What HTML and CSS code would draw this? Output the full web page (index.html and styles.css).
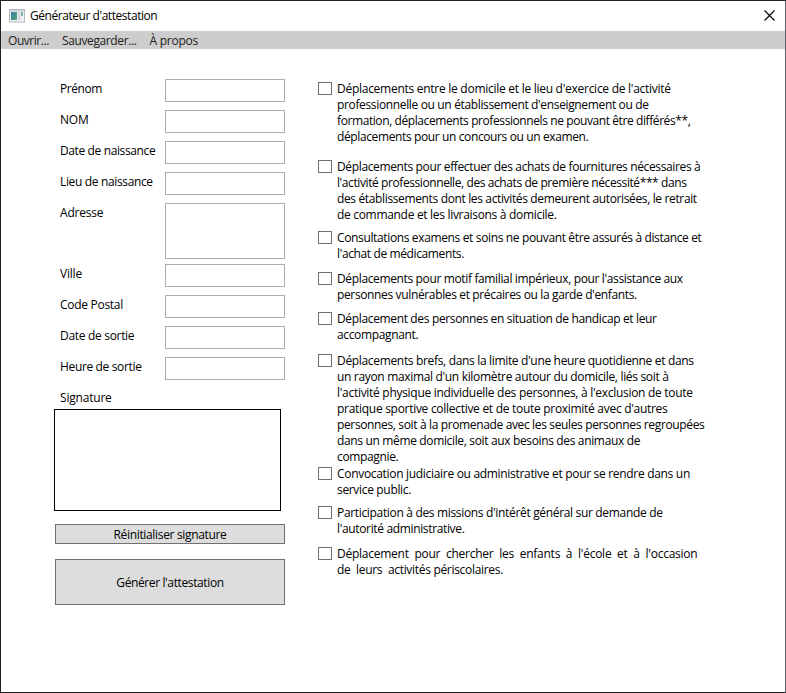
FILE: index.html
```html
<!DOCTYPE html>
<html lang="fr">
<head>
<meta charset="utf-8">
<title>Générateur d'attestation</title>
<link rel="stylesheet" href="styles.css">
</head>
<body>
<div class="window">
  <header class="titlebar">
    <svg class="app-icon" width="16" height="14" viewBox="0 0 16 14">
      <defs><linearGradient id="g" x1="0" y1="0" x2="1" y2="1"><stop offset="0" stop-color="#3f78a0"/><stop offset="1" stop-color="#55a878"/></linearGradient></defs>
      <rect x="0.5" y="0.5" width="15" height="12.5" fill="#eef0f3" stroke="#b4b8bd"/>
      <rect x="1" y="1" width="14" height="1.5" fill="#cdd1d6"/>
      <rect x="2" y="3" width="6" height="8" fill="url(#g)"/>
      <rect x="9" y="3" width="2.5" height="8" fill="#d5dae1"/>
      <rect x="12" y="3" width="2" height="4" fill="#80b29b"/>
    </svg>
    <h1 class="title t45">Générateur d'attestation</h1>
    <svg class="close" width="11" height="11" viewBox="0 0 11 11"><path d="M.5 .5 10.5 10.5M10.5 .5 .5 10.5" stroke="#000" stroke-width="1.1"/></svg>
  </header>
  <nav class="menu">
    <span class="t45">Ouvrir...</span><span class="t38">Sauvegarder...</span><span class="t25">À propos</span>
  </nav>
  <main class="content">
    <form class="form">
      <label class="field"><span class="t45">Prénom</span><input type="text"></label>
      <label class="field"><span>NOM</span><input type="text"></label>
      <label class="field"><span class="t38">Date de naissance</span><input type="text"></label>
      <label class="field"><span class="t35">Lieu de naissance</span><input type="text"></label>
      <label class="field field-tall"><span>Adresse</span><textarea></textarea></label>
      <label class="field"><span>Ville</span><input type="text"></label>
      <label class="field"><span class="t29">Code Postal</span><input type="text"></label>
      <label class="field"><span class="t31">Date de sortie</span><input type="text"></label>
      <label class="field"><span class="t35">Heure de sortie</span><input type="text"></label>
      <div class="signature-label">Signature</div>
      <div class="signature"></div>
      <button class="reset t33" type="button">Réinitialiser signature</button>
      <button class="generate t38" type="button">Générer l'attestation</button>
    </form>
    <section class="reasons">
      <label class="reason g14"><input type="checkbox"><span><span class="t27">Déplacements entre le domicile et le lieu d'exercice de l'activité</span><br><span class="t35">professionnelle ou un établissement d'enseignement ou de</span><br><span class="t41">formation, déplacements professionnels ne pouvant être différés**,</span><br><span class="t38">déplacements pour un concours ou un examen.</span></span></label>
      <label class="reason g7"><input type="checkbox"><span><span class="t36">Déplacements pour effectuer des achats de fournitures nécessaires à</span><br><span class="t41">l'activité professionnelle, des achats de première nécessité*** dans</span><br><span class="t36">des établissements dont les activités demeurent autorisées, le retrait</span><br><span class="t31">de commande et les livraisons à domicile.</span></span></label>
      <label class="reason g9"><input type="checkbox"><span><span class="t36">Consultations examens et soins ne pouvant être assurés à distance et</span><br><span class="t38">l'achat de médicaments.</span></span></label>
      <label class="reason g8"><input type="checkbox"><span><span class="t36">Déplacements pour motif familial impérieux, pour l'assistance aux</span><br><span class="t36">personnes vulnérables et précaires ou la garde d'enfants.</span></span></label>
      <label class="reason g10"><input type="checkbox"><span><span class="t35">Déplacement des personnes en situation de handicap et leur</span><br><span class="t35">accompagnant.</span></span></label>
      <label class="reason g1"><input type="checkbox"><span><span class="t33">Déplacements brefs, dans la limite d'une heure quotidienne et dans</span><br><span class="t33">un rayon maximal d'un kilomètre autour du domicile, liés soit à</span><br><span class="t29">l'activité physique individuelle des personnes, à l'exclusion de toute</span><br><span class="t29">pratique sportive collective et de toute proximité avec d'autres</span><br><span class="t36">personnes, soit à la promenade avec les seules personnes regroupées</span><br><span class="t35">dans un même domicile, soit aux besoins des animaux de</span><br><span class="t35">compagnie.</span></span></label>
      <label class="reason g7"><input type="checkbox"><span><span class="t31">Convocation judiciaire ou administrative et pour se rendre dans un</span><br><span class="t33">service public.</span></span></label>
      <label class="reason g9"><input type="checkbox"><span><span class="t33">Participation à des missions d'intérêt général sur demande de</span><br><span class="t35">l'autorité administrative.</span></span></label>
      <label class="reason"><input type="checkbox"><span><span class="t25">Déplacement  pour  chercher  les  enfants  à  l'école  et  à  l'occasion</span><br><span class="t31">de  leurs  activités périscolaires.</span></span></label>
    </section>
  </main>
</div>
</body>
</html>
```

FILE: styles.css
```css
* { box-sizing: border-box; }
body {
  margin: 0;
  font: 12px/16px "Open Sans", "Noto Sans", sans-serif;
  letter-spacing: -0.2px;
  color: #000;
}
.window {
  width: 786px;
  height: 693px;
  background: #fff;
  border: 1px solid #231f20;
  border-right-color: #5c6467;
  overflow: hidden;
}
.titlebar {
  display: flex;
  align-items: center;
  height: 30px;
  padding: 0 10px 0 8px;
}
.title { flex: 1; margin: 0 0 0 5px; font: inherit; }
.close { margin-bottom: 2px; }
.menu {
  display: flex;
  gap: 13px;
  height: 18px;
  padding: 2px 7px 0;
  background: #cdcdcd;
  color: #212121;
}
.content { display: flex; padding: 30px 0 0 53px; }
.form { display: flex; flex-direction: column; width: 231px; margin-right: 33px; }
.field { display: flex; justify-content: space-between; height: 31px; padding-left: 6px; }
.field span { padding-top: 2px; white-space: nowrap; }
.field input, .field textarea {
  width: 120px;
  height: 23px;
  margin: 0;
  border: 1px solid #abadb3;
  border-radius: 0;
  background: #fff;
  resize: none;
  outline: 0;
}
.field-tall { height: 61px; }
.field-tall textarea { height: 56px; }
.signature-label { height: 21px; padding: 2px 0 0 6px; }
.signature { width: 227px; height: 102px; border: 1px solid #000; }
button {
  width: 230px;
  margin-left: 1px;
  padding: 2px 0 0;
  border: 1px solid #707070;
  border-radius: 0;
  background: #ddd;
  color: #000;
  font: inherit;
  letter-spacing: inherit;
}
.reset { height: 20px; margin-top: 13px; }
.generate { height: 46px; margin-top: 15px; }
.reasons { display: flex; flex-direction: column; padding-top: 2px; }
.reason { display: flex; align-items: flex-start; gap: 5px; white-space: pre; }
.reason input {
  appearance: none;
  flex: none;
  width: 14px;
  height: 13px;
  margin: 1px 0 0;
  border: 1px solid #707070;
  background: #fff;
}

/* spacing below each reason */
.g1 { margin-bottom: 1px; }
.g7 { margin-bottom: 7px; }
.g8 { margin-bottom: 8px; }
.g9 { margin-bottom: 9px; }
.g10 { margin-bottom: 10px; }
.g14 { margin-bottom: 14px; }

/* tracking, in hundredths of a pixel */
.t25 { letter-spacing: -0.25px; }
.t27 { letter-spacing: -0.27px; }
.t29 { letter-spacing: -0.29px; }
.t31 { letter-spacing: -0.31px; }
.t33 { letter-spacing: -0.33px; }
.t35 { letter-spacing: -0.35px; }
.t36 { letter-spacing: -0.36px; }
.t38 { letter-spacing: -0.38px; }
.t41 { letter-spacing: -0.41px; }
.t45 { letter-spacing: -0.45px; }
```
